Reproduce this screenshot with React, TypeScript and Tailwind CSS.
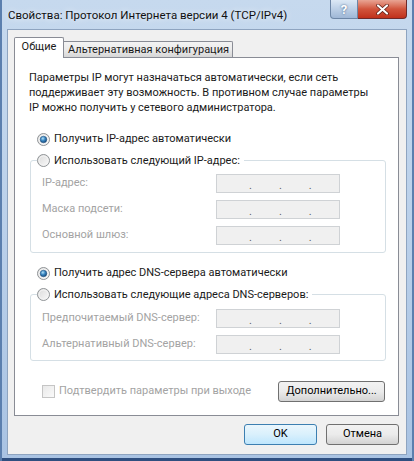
import React from 'react';

const Radio: React.FC<{ checked?: boolean }> = ({ checked }) => (
  <svg width="13" height="13" viewBox="0 0 13 13" className="shrink-0">
    <defs>
      <linearGradient id="rbg" x1="0" y1="0" x2="1" y2="1">
        <stop offset="0" stopColor="#d9d9d9" />
        <stop offset="1" stopColor="#fbfbfb" />
      </linearGradient>
      <radialGradient id="rdot" cx="0.4" cy="0.35" r="0.7">
        <stop offset="0" stopColor="#b5e0f7" />
        <stop offset="0.45" stopColor="#3d8ac4" />
        <stop offset="1" stopColor="#0f4174" />
      </radialGradient>
    </defs>
    <circle cx="6.5" cy="6.5" r="6" fill="url(#rbg)" stroke="#8f9396" strokeWidth="1" />
    <circle cx="6.5" cy="6.5" r="4.5" fill="none" stroke="#f4f4f4" strokeWidth="1" />
    {checked && <circle cx="6.5" cy="6.5" r="3.3" fill="url(#rdot)" stroke="#1e4e7e" strokeWidth="0.5" />}
  </svg>
);

const IpBox = () => (
  <div className="w-[124px] h-[19px] border border-[#cfd2d5] bg-[#f0f0f0] flex items-center pl-[32px] gap-[27px] text-[#5e5e5e] leading-none pt-[3px]">
    <span>.</span>
    <span>.</span>
    <span>.</span>
  </div>
);

const Row: React.FC<{ label: string }> = ({ label }) => (
  <div className="flex items-center h-[19px]">
    <div className="w-[185px] pl-[11px] text-[#a3a3a3] whitespace-nowrap">{label}</div>
    <IpBox />
  </div>
);

const WinButton: React.FC<{ children: React.ReactNode; primary?: boolean; w: string }> = ({ children, primary, w }) => (
  <button
    className={
      primary
        ? `${w} h-[21px] rounded-[3px] border border-[#3c7fb1] bg-gradient-to-b from-[#eaf6fd] via-[#d9f0fc] to-[#bee6fd] text-black flex items-center justify-center whitespace-nowrap`
        : `${w} h-[21px] rounded-[3px] border border-[#707070] bg-gradient-to-b from-[#f2f2f2] via-[#ebebeb] to-[#d3d3d3] text-black flex items-center justify-center whitespace-nowrap`
    }
  >
    {children}
  </button>
);

export default function App() {
  return (
    <div className="w-[414px] h-[461px] overflow-hidden flex flex-col bg-gradient-to-b from-[#c6d9ee] via-[#bad0ea] to-[#a9c3e3] font-['Roboto',sans-serif] text-[11px] text-[#1a1a1a] shadow-[inset_2px_0_0_#5b7fae,inset_-2px_0_0_#5b7fae,inset_0_-3px_0_#2f4f80]">
      {/* title bar */}
      <div className="h-[29px] flex items-start shrink-0">
        <div className="pl-[8px] pt-[7px] leading-[16px] text-[11.5px] text-[#111] whitespace-nowrap [text-shadow:0_0_6px_#fff]">
          Свойства: Протокол Интернета версии 4 (TCP/IPv4)
        </div>
        <div className="ml-auto mr-[7px] flex h-[19px]">
          <div className="w-[28px] h-[19px] rounded-bl-[4px] border border-t-0 border-[#6d86a6] bg-gradient-to-b from-[#dce8f5] via-[#bccfe6] to-[#9fb7d6] flex items-center justify-center text-white font-bold text-[13px] leading-none [text-shadow:0_0_2px_#33507a]">
            ?
          </div>
          <div className="w-[49px] h-[19px] rounded-br-[4px] border border-t-0 border-l-0 border-[#6e2a2a] bg-gradient-to-b from-[#e8a493] via-[#d1543c] to-[#c0301b] flex items-center justify-center">
            <svg width="13" height="11" viewBox="0 0 13 11">
              <path d="M2 1.5 L11 9.5 M11 1.5 L2 9.5" stroke="#5a1a12" strokeWidth="3.6" strokeLinecap="round" />
              <path d="M2 1.5 L11 9.5 M11 1.5 L2 9.5" stroke="#ffffff" strokeWidth="2.2" strokeLinecap="round" />
            </svg>
          </div>
        </div>
      </div>

      {/* client area */}
      <div className="mx-[7px] h-[426px] shrink-0 border border-[#8ea4c0] bg-[#f0f0f0] pt-[7px] pl-[6px] flex flex-col">
        {/* tabs */}
        <div className="flex items-end h-[20px]">
          <div className="relative z-10 w-[50px] h-[21px] -mb-px bg-white border border-b-0 border-[#898c95] rounded-t-[2px] flex items-center justify-center pb-[2px]">
            Общие
          </div>
          <div className="w-[169px] h-[16px] border border-l-0 border-b-0 border-[#898c95] rounded-tr-[2px] bg-gradient-to-b from-[#f3f3f3] via-[#ebebeb] to-[#d6d6d6] flex items-center pl-[4px] leading-none whitespace-nowrap">
            Альтернативная конфигурация
          </div>
        </div>

        {/* panel */}
        <div className="w-[385px] h-[359px] border border-[#898c95] bg-white pl-[14px] pr-[12px] pt-[12px] flex flex-col">
          <p className="leading-[15px] whitespace-nowrap">
            Параметры IP могут назначаться автоматически, если сеть
            <br />
            поддерживает эту возможность. В противном случае параметры
            <br />
            IP можно получить у сетевого администратора.
          </p>

          <div className="mt-[17px] h-[15px] flex items-center gap-[4px] pl-[8px] whitespace-nowrap">
            <Radio checked />
            <span>Получить IP-адрес автоматически</span>
          </div>

          <fieldset className="mt-[6px] ml-[1px] border border-[#d5dfe5] rounded-[3px] pb-[7px]">
            <legend className="ml-[6px] pr-[4px] h-[15px] flex items-center gap-[4px] leading-[15px] whitespace-nowrap">
              <Radio />
              <span>Использовать следующий IP-адрес:</span>
            </legend>
            <div className="pt-[6px] flex flex-col gap-[7px]">
              <Row label="IP-адрес:" />
              <Row label="Маска подсети:" />
              <Row label="Основной шлюз:" />
            </div>
          </fieldset>

          <div className="mt-[13px] h-[15px] flex items-center gap-[4px] pl-[8px] whitespace-nowrap">
            <Radio checked />
            <span>Получить адрес DNS-сервера автоматически</span>
          </div>

          <fieldset className="mt-[6px] ml-[1px] border border-[#d5dfe5] rounded-[3px] pb-[6px]">
            <legend className="ml-[6px] pr-[4px] h-[15px] flex items-center gap-[4px] leading-[15px] whitespace-nowrap">
              <Radio />
              <span>Использовать следующие адреса DNS-серверов:</span>
            </legend>
            <div className="pt-[7px] flex flex-col gap-[7px]">
              <Row label="Предпочитаемый DNS-сервер:" />
              <Row label="Альтернативный DNS-сервер:" />
            </div>
          </fieldset>

          <div className="mt-[20px] flex items-center">
            <div className="ml-[13px] w-[13px] h-[13px] border border-[#c5c5c5] bg-gradient-to-br from-[#e9e9e9] to-[#fafafa]" />
            <span className="ml-[4px] text-[#a3a3a3] whitespace-nowrap">Подтвердить параметры при выходе</span>
            <div className="ml-auto mr-[1px]">
              <WinButton w="w-[107px]">Дополнительно...</WinButton>
            </div>
          </div>
        </div>

        {/* dialog buttons */}
        <div className="w-[385px] mt-[8px] flex justify-end gap-[9px]">
          <WinButton primary w="w-[73px]">OK</WinButton>
          <WinButton w="w-[73px]">Отмена</WinButton>
        </div>
      </div>
    </div>
  );
}
